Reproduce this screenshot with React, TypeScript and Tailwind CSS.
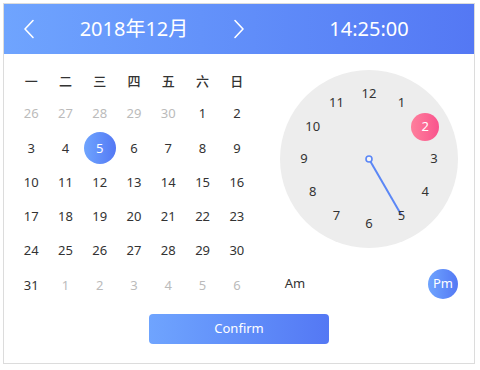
import React from 'react';

const WEEKDAYS = ['一', '二', '三', '四', '五', '六', '日'];

// 上月、本月、下月的日期
const DAYS: { d: number; muted?: boolean }[] = [
  ...[26, 27, 28, 29, 30].map((d) => ({ d, muted: true })),
  ...Array.from({ length: 31 }, (_, i) => ({ d: i + 1 })),
  ...[1, 2, 3, 4, 5, 6].map((d) => ({ d, muted: true })),
];

const HOURS = [12, 1, 2, 3, 4, 5, 6, 7, 8, 9, 10, 11];

function Chevron({ dir }: { dir: 'left' | 'right' }) {
  return (
    <svg width="14" height="20" viewBox="0 0 14 20" fill="none">
      <path
        d={dir === 'left' ? 'M11 1.5 L3 10 L11 18.5' : 'M3 1.5 L11 10 L3 18.5'}
        stroke="white"
        strokeWidth="1.6"
        strokeLinecap="round"
        strokeLinejoin="round"
      />
    </svg>
  );
}

function Clock() {
  const size = 178;
  const c = size / 2;
  const r = 65;
  const handAngle = (150 * Math.PI) / 180;

  return (
    <div className="relative h-[178px] w-[178px] rounded-full bg-[#ededed]">
      <svg className="absolute inset-0" width={size} height={size}>
        <line
          x1={c}
          y1={c}
          x2={c + Math.sin(handAngle) * r}
          y2={c - Math.cos(handAngle) * r}
          stroke="#5b87f6"
          strokeWidth="2"
        />
        <circle cx={c} cy={c} r="3" fill="#f5f5f5" stroke="#5b87f6" strokeWidth="1.6" />
      </svg>
      {HOURS.map((h, i) => {
        const a = (i * 30 * Math.PI) / 180;
        const x = c + Math.sin(a) * r;
        const y = c - Math.cos(a) * r;
        const active = h === 2;
        return (
          <div
            key={h}
            className={
              active
                ? 'absolute flex h-[28px] w-[28px] -translate-x-1/2 -translate-y-1/2 items-center justify-center rounded-full bg-gradient-to-r from-[#fe7f9c] to-[#f9528d] text-[13px] text-white'
                : 'absolute flex h-[28px] w-[28px] -translate-x-1/2 -translate-y-1/2 items-center justify-center text-[13px] text-[#333]'
            }
            style={{ left: x, top: y }}
          >
            {h}
          </div>
        );
      })}
    </div>
  );
}

export default function App() {
  return (
    <div
      className="h-[370px] w-[480px] bg-white p-[3px]"
      style={{ fontFamily: '"Noto Sans", "Noto Sans CJK SC", sans-serif' }}
    >
      <div className="h-[361px] w-[472px] border border-[#dcdcdc] bg-white">
        {/* 头部 */}
        <div className="flex h-[50px] items-center bg-gradient-to-r from-[#6fa4fe] to-[#5478f4] text-white">
          <div className="ml-[10px] flex w-[240px] items-center justify-between">
            <button className="flex h-[30px] w-[30px] items-center justify-center">
              <Chevron dir="left" />
            </button>
            <span className="text-[20px] leading-none">2018年12月</span>
            <button className="flex h-[30px] w-[30px] items-center justify-center">
              <Chevron dir="right" />
            </button>
          </div>
          <div className="ml-[26px] w-[178px] text-center text-[20px] leading-none">14:25:00</div>
        </div>

        {/* 主体 */}
        <div className="flex h-[260px]">
          <div className="ml-[10px] w-[240px] pt-[13px]">
            <div className="grid h-[30px] grid-cols-7">
              {WEEKDAYS.map((w) => (
                <div key={w} className="flex items-center justify-center text-[13px] font-medium text-[#333]">
                  {w}
                </div>
              ))}
            </div>
            <div className="grid grid-cols-7 auto-rows-[34.25px]">
              {DAYS.map((day, i) => {
                const selected = !day.muted && day.d === 5;
                return (
                  <div key={i} className="flex items-center justify-center">
                    <span
                      className={
                        selected
                          ? 'flex h-[32px] w-[32px] items-center justify-center rounded-full bg-gradient-to-r from-[#6fa4fe] to-[#5478f4] text-[13px] text-white'
                          : day.muted
                            ? 'text-[13px] text-[#bbbbbb]'
                            : 'text-[13px] text-[#333]'
                      }
                    >
                      {day.d}
                    </span>
                  </div>
                );
              })}
            </div>
          </div>

          <div className="ml-[26px] w-[178px] pt-[16px]">
            <Clock />
            <div className="mt-[21px] flex h-[30px] items-center justify-between">
              <span className="flex h-[30px] w-[30px] items-center justify-center text-[13px] text-[#333]">Am</span>
              <span className="flex h-[30px] w-[30px] items-center justify-center rounded-full bg-gradient-to-r from-[#6fa4fe] to-[#5478f4] text-[13px] text-white">
                Pm
              </span>
            </div>
          </div>
        </div>

        <div className="flex justify-center">
          <button className="h-[30px] w-[180px] rounded-[4px] bg-gradient-to-r from-[#6fa4fe] to-[#5478f4] text-[13px] text-white">
            Confirm
          </button>
        </div>
      </div>
    </div>
  );
}
